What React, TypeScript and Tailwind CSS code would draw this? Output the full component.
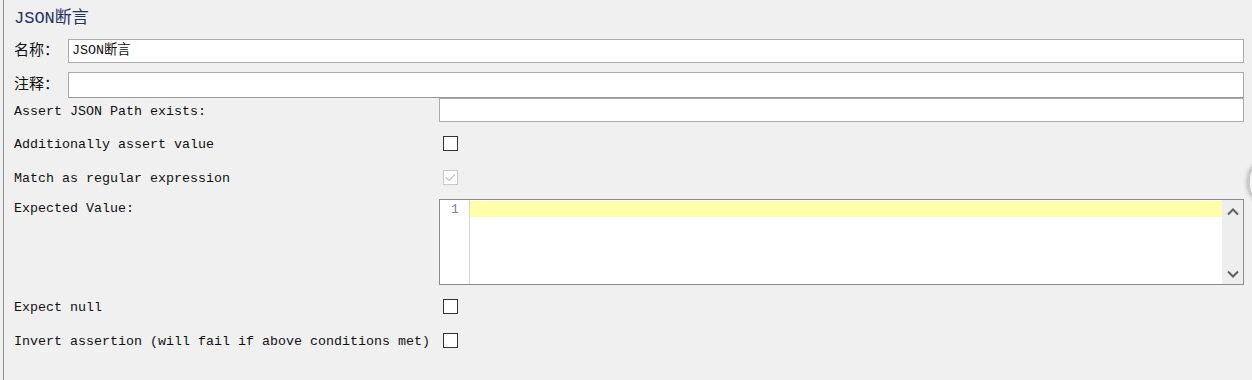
import type { FC, ReactNode } from 'react';

const mono = 'font-["Liberation_Mono","Noto_Sans_CJK_SC",monospace]';

type CheckProps = { checked?: boolean; disabled?: boolean };
const Check: FC<CheckProps> = ({ checked, disabled }) => (
  <div
    className={`ml-[4px] w-[15px] h-[15px] bg-white border flex items-center justify-center ${
      disabled ? 'border-[#c8c8c8] bg-[#f4f4f4]' : 'border-[#333333]'
    }`}
  >
    {checked && (
      <svg width="11" height="9" viewBox="0 0 11 9" fill="none">
        <path d="M1 4.5 L4 7.5 L10 1.5" stroke={disabled ? '#c4c4c4' : '#333'} strokeWidth="1.2" />
      </svg>
    )}
  </div>
);

type RowProps = { label: string; children: ReactNode; className?: string; labelClass?: string };
const Row: FC<RowProps> = ({ label, children, className = 'h-[34px] items-center', labelClass = 'pt-[4px]' }) => (
  <div className={`flex ${className}`}>
    <div className={`w-[425px] shrink-0 text-[13.33px] leading-[16px] text-[#111] ${labelClass}`}>{label}</div>
    <div className="flex-1 flex items-center h-full">{children}</div>
  </div>
);

const Editor: FC = () => (
  <div className="flex-1 h-[86px] bg-white border border-[#8c8c8c] flex">
    <div className="w-[30px] border-r border-[#d6d6d6] pt-[2px] pl-[11px] text-[13px] leading-[16px] text-[#6f86a8]">1</div>
    <div className="flex-1 pt-[1px]">
      <div className="h-[16px] bg-[#ffffaa]" />
    </div>
    <div className="w-[21px] bg-[#eeeeee] flex flex-col items-center justify-between pt-[8px] pb-[6px]">
      <svg width="12" height="8" viewBox="0 0 12 8" fill="none">
        <path d="M1 6.5 L6 1.5 L11 6.5" stroke="#5f5f5f" strokeWidth="2" />
      </svg>
      <svg width="12" height="8" viewBox="0 0 12 8" fill="none">
        <path d="M1 1.5 L6 6.5 L11 1.5" stroke="#5f5f5f" strokeWidth="2" />
      </svg>
    </div>
  </div>
);

export default function App() {
  return (
    <div className={`relative w-[1252px] h-[380px] overflow-hidden bg-[#f0f0f0] ${mono}`}>
      <div className="ml-[3px] h-full border-l border-[#8f8f8f] pl-[10px] pr-[8px]">
        <div className="h-[39px] flex items-center pb-[2px] text-[17px] text-[#1e3264]">JSON断言</div>

        <div className="flex h-[24px] items-center">
          <div className="w-[54px] shrink-0 pt-[2px] text-[15px] text-[#111]">名称：</div>
          <div className="flex-1 h-full bg-white border border-[#ababab] flex items-center pl-[3px] text-[13.33px] text-[#111]">
            JSON断言
          </div>
        </div>

        <div className="flex h-[26px] items-center mt-[9px]">
          <div className="w-[54px] shrink-0 pt-[2px] text-[15px] text-[#111]">注释：</div>
          <div className="flex-1 h-full bg-white border border-[#ababab] border-b-[#9a9a9a]" />
        </div>

        <Row label="Assert JSON Path exists:" className="h-[24px] items-center" labelClass="pt-[3px]">
          <div className="flex-1 h-full bg-white border border-[#ababab]" />
        </Row>

        <div className="mt-[4px]">
          <Row label="Additionally assert value">
            <Check />
          </Row>
          <Row label="Match as regular expression">
            <Check checked disabled />
          </Row>
        </div>

        <Row label="Expected Value:" className="mt-[5px] items-start" labelClass="pt-[2px]">
          <Editor />
        </Row>

        <div className="mt-[4px]">
          <Row label="Expect null">
            <Check />
          </Row>
          <Row label="Invert assertion (will fail if above conditions met)">
            <Check />
          </Row>
        </div>
      </div>

      <div className="absolute left-[1247px] top-[160px] w-[40px] h-[44px] rounded-full bg-[#f7f7f7] border-l-[3px] border-[#c9c9c9] shadow-[0_0_4px_rgba(0,0,0,0.25)]" />
    </div>
  );
}
